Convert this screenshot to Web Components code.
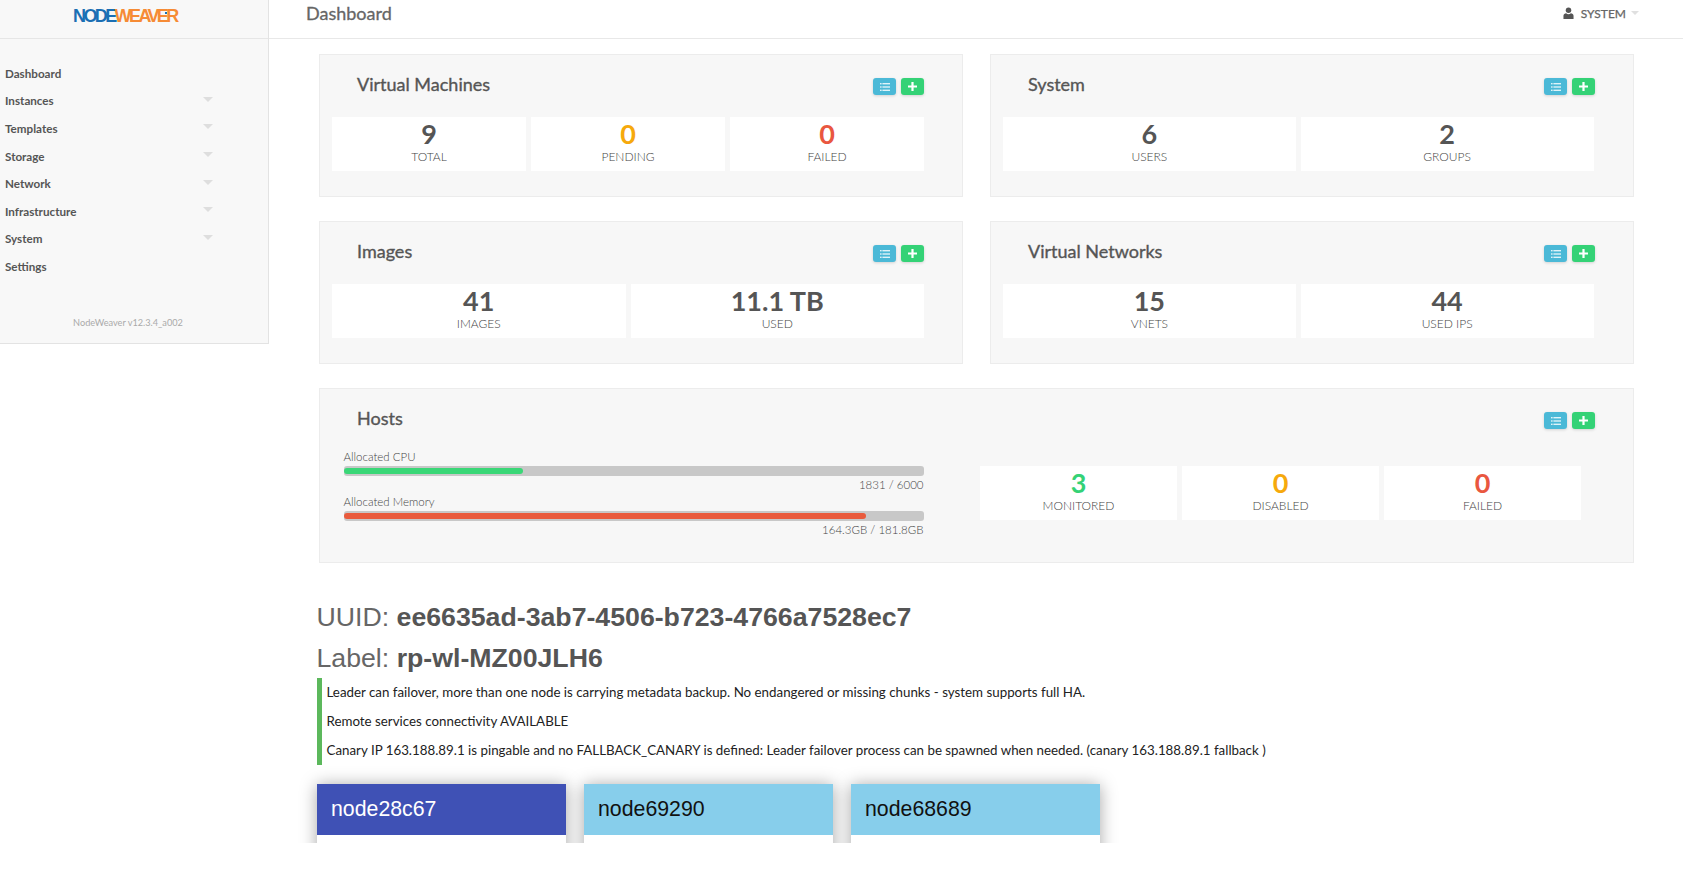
<!DOCTYPE html>
<html>
<head>
<meta charset="utf-8">
<title>NodeWeaver</title>
<style>
	html, body { margin: 0; padding: 0; background: #fff; }
	body { font-family: "Lato", "Liberation Sans", sans-serif; color: #555; }
</style>
</head>
<body>
<nw-app>
	<nw-sidebar slot="side" version="NodeWeaver v12.3.4_a002">
		<nw-nav-item>Dashboard</nw-nav-item>
		<nw-nav-item caret>Instances</nw-nav-item>
		<nw-nav-item caret>Templates</nw-nav-item>
		<nw-nav-item caret>Storage</nw-nav-item>
		<nw-nav-item caret>Network</nw-nav-item>
		<nw-nav-item caret>Infrastructure</nw-nav-item>
		<nw-nav-item caret>System</nw-nav-item>
		<nw-nav-item>Settings</nw-nav-item>
	</nw-sidebar>
	<nw-topbar slot="top" title="Dashboard" user="SYSTEM"></nw-topbar>

	<nw-row>
		<nw-card title="Virtual Machines">
			<nw-stats>
				<nw-stat value="9" label="TOTAL"></nw-stat>
				<nw-stat value="0" label="PENDING" tone="warn"></nw-stat>
				<nw-stat value="0" label="FAILED" tone="bad"></nw-stat>
			</nw-stats>
		</nw-card>
		<nw-card title="System">
			<nw-stats inset>
				<nw-stat value="6" label="USERS"></nw-stat>
				<nw-stat value="2" label="GROUPS"></nw-stat>
			</nw-stats>
		</nw-card>
	</nw-row>
	<nw-row>
		<nw-card title="Images">
			<nw-stats>
				<nw-stat value="41" label="IMAGES"></nw-stat>
				<nw-stat value="11.1 TB" label="USED"></nw-stat>
			</nw-stats>
		</nw-card>
		<nw-card title="Virtual Networks">
			<nw-stats inset>
				<nw-stat value="15" label="VNETS"></nw-stat>
				<nw-stat value="44" label="USED IPS"></nw-stat>
			</nw-stats>
		</nw-card>
	</nw-row>
	<nw-card title="Hosts" wide>
		<nw-hosts>
			<nw-meter slot="meters" label="Allocated CPU" value="1831 / 6000" percent="30.9" color="#3ad777"></nw-meter>
			<nw-meter slot="meters" label="Allocated Memory" value="164.3GB / 181.8GB" percent="90" color="#e95b3d"></nw-meter>
			<nw-stat value="3" label="MONITORED" tone="good"></nw-stat>
			<nw-stat value="0" label="DISABLED" tone="warn"></nw-stat>
			<nw-stat value="0" label="FAILED" tone="bad"></nw-stat>
		</nw-hosts>
	</nw-card>

	<nw-cluster uuid="ee6635ad-3ab7-4506-b723-4766a7528ec7" label="rp-wl-MZ00JLH6">
		<p>Leader can failover, more than one node is carrying metadata backup. No endangered or missing chunks - system supports full HA.</p>
		<p>Remote services connectivity AVAILABLE</p>
		<p>Canary IP 163.188.89.1 is pingable and no FALLBACK_CANARY is defined: Leader failover process can be spawned when needed. (canary 163.188.89.1 fallback )</p>
		<nw-node slot="nodes" name="node28c67" leader></nw-node>
		<nw-node slot="nodes" name="node69290"></nw-node>
		<nw-node slot="nodes" name="node68689"></nw-node>
	</nw-cluster>
</nw-app>

<script>
(function() {
	function define(name, html, extra) {
		let template = document.createElement("template");
		template.innerHTML = html;
		class El extends HTMLElement {
			constructor() {
				super();
				this._shadowRoot = this.attachShadow({mode: "open"});
				this._shadowRoot.appendChild(template.content.cloneNode(true));
			}
			connectedCallback() {
				if (extra) extra.call(this, this._shadowRoot);
			}
		}
		customElements.define(name, El);
	}

	define("nw-app", `
		<style>
		:host { display: block; width: 1683px; height: 843px; overflow: hidden; position: relative; }
		.layout { display: grid; grid-template-columns: 269px 1fr; align-items: start; }
		.content { padding: 15px 0 0 50px; }
		</style>
		<div class="layout">
			<slot name="side"></slot>
			<div>
				<slot name="top"></slot>
				<div class="content"><slot></slot></div>
			</div>
		</div>
	`);

	define("nw-sidebar", `
		<style>
		:host { display: block; height: 344px; box-sizing: border-box; background: #f8f8f8; border-right: 1px solid #e3e3e3; border-bottom: 1px solid #e3e3e3; }
		.brand { height: 39px; box-sizing: border-box; border-bottom: 1px solid #e6e6e6; padding-left: 73px; display: flex; align-items: center; }
		.logo { font: bold 18px "Liberation Sans", sans-serif; letter-spacing: -2.6px; position: relative; top: -3px; line-height: 18px; }
		.logo b { color: #1b6fb4; }
		.logo i { font-style: normal; color: #f68b35; }
		/* the little blue mark inside the last letters of the logo */
		.logo::after { content: ""; position: absolute; left: 92px; top: 5px; width: 2px; height: 2px; background: #1b6fb4; }
		nav { padding: 20.5px 0 0 5px; }
		.version { margin-top: 36.5px; text-align: center; padding-right: 12px; font-size: 9.2px; line-height: 12px; color: #aaa; }
		</style>
		<div class="brand"><div class="logo"><b>NODE</b><i>WEAVER</i></div></div>
		<nav><slot></slot></nav>
		<div class="version" id="version"></div>
	`, function(root) {
		root.getElementById("version").textContent = this.getAttribute("version");
	});

	define("nw-nav-item", `
		<style>
		:host { display: flex; align-items: center; width: 208px; height: 27.6px; font-size: 11.65px; font-weight: 700; color: #555; }
		.caret { margin-left: auto; display: none; width: 0; height: 0; border-left: 5px solid transparent; border-right: 5px solid transparent; border-top: 5px solid #dedede; position: relative; top: -1.5px; }
		:host([caret]) .caret { display: block; }
		</style>
		<slot></slot><span class="caret"></span>
	`);

	define("nw-topbar", `
		<style>
		:host { display: flex; align-items: flex-start; height: 39px; box-sizing: border-box; border-bottom: 1px solid #e8e8e8; }
		h1 { margin: 0 0 0 37px; font-size: 18px; line-height: 26px; font-weight: 400; -webkit-text-stroke: .3px #666; color: #666; }
		.user { margin-left: auto; margin-right: 44px; display: flex; align-items: center; height: 26px; font-size: 12px; font-weight: 400; -webkit-text-stroke: .25px #666; color: #666; }
		svg { width: 11px; height: 12px; margin-right: 7px; }
		.caret { margin-left: 5px; width: 0; height: 0; border-left: 4px solid transparent; border-right: 4px solid transparent; border-top: 4px solid #e0e0e0; }
		</style>
		<h1 id="title"></h1>
		<div class="user">
			<svg viewBox="0 0 12 13"><circle cx="6" cy="3.4" r="3" fill="#555"/><path d="M0.5 13V9.6C0.5 7.9 2 7 3.4 6.8 4 7.4 5 7.8 6 7.8S8 7.4 8.6 6.8C10 7 11.5 7.9 11.5 9.6V13Z" fill="#555"/></svg>
			<span id="user"></span><span class="caret"></span>
		</div>
	`, function(root) {
		root.getElementById("title").textContent = this.getAttribute("title");
		root.getElementById("user").textContent = this.getAttribute("user");
	});

	define("nw-row", `
		<style>
		:host { display: grid; grid-template-columns: 644px 644px; column-gap: 27px; margin-bottom: 24px; }
		</style>
		<slot></slot>
	`);

	define("nw-card", `
		<style>
		:host { display: block; height: 143px; box-sizing: border-box; background: #f7f7f7; border: 1px solid #ececec; padding: 0 38px 0 12px; }
		:host([wide]) { width: 1315px; height: 175px; }
		.head { display: flex; height: 62px; padding-left: 25px; }
		h2 { margin: 15px 0 0; font-size: 18px; line-height: 28px; font-weight: 400; -webkit-text-stroke: .35px #555; color: #555; }
		.tools { margin-left: auto; margin-top: 23px; display: flex; gap: 5px; }
		button { width: 23px; height: 17px; padding: 0; border: 0; border-radius: 3px; display: flex; align-items: center; justify-content: center; box-shadow: 0 1px 3px rgba(0,0,0,.15); }
		.list { background: #4bb9d7; }
		.add { background: #34d276; }
		:host([wide]) .head { height: 60px; }
		</style>
		<div class="head">
			<h2 id="title"></h2>
			<div class="tools">
				<button class="list"><svg width="10" height="8" viewBox="0 0 10 8" fill="#dff3f8"><rect x="0" y="0" width="1.6" height="1.4"/><rect x="2.4" y="0" width="7.6" height="1.4"/><rect x="0" y="3.3" width="1.6" height="1.4"/><rect x="2.4" y="3.3" width="7.6" height="1.4"/><rect x="0" y="6.6" width="1.6" height="1.4"/><rect x="2.4" y="6.6" width="7.6" height="1.4"/></svg></button>
				<button class="add"><svg width="9" height="9" viewBox="0 0 9 9" fill="#fff"><path d="M3.4 0H5.6V3.4H9V5.6H5.6V9H3.4V5.6H0V3.4H3.4Z"/></svg></button>
			</div>
		</div>
		<slot></slot>
	`, function(root) {
		root.getElementById("title").textContent = this.getAttribute("title");
	});

	define("nw-stats", `
		<style>
		:host { display: flex; gap: 5px; }
		:host([inset]) { margin-right: 1.5px; }
		::slotted(nw-stat) { flex: 1 1 0; }
		</style>
		<slot></slot>
	`);

	define("nw-stat", `
		<style>
		:host { display: block; height: 54px; background: #fff; text-align: center; color: #555; }
		.value { font-size: 27px; font-weight: 700; line-height: 28px; padding-top: 3px; }
		.label { font-size: 12px; font-weight: 300; line-height: 16px; color: #444; margin-top: 1px; }
		:host([tone="warn"]) .value { color: #f6a90c; }
		:host([tone="bad"]) .value { color: #e9573f; }
		:host([tone="good"]) .value { color: #34d276; }
		</style>
		<div class="value" id="value"></div>
		<div class="label" id="label"></div>
	`, function(root) {
		root.getElementById("value").textContent = this.getAttribute("value");
		root.getElementById("label").textContent = this.getAttribute("label");
	});

	define("nw-hosts", `
		<style>
		:host { display: flex; }
		.meters { width: 580px; margin-left: 11.5px; }
		.tiles { width: 601px; margin-left: 56.5px; margin-top: 17px; display: flex; gap: 5px; }
		::slotted(nw-stat) { flex: 1 1 0; }
		</style>
		<div class="meters"><slot name="meters"></slot></div>
		<div class="tiles"><slot></slot></div>
	`);

	define("nw-meter", `
		<style>
		:host { display: block; font-size: 11.5px; font-weight: 300; color: #444; height: 45px; }
		.label { line-height: 15px; }
		.track { height: 10px; margin-top: 2px; border-radius: 3px; background: #c8c8c8; padding-top: 2px; box-sizing: border-box; }
		.fill { height: 6px; border-radius: 3px; }
		.value { text-align: right; line-height: 15px; margin-top: 1px; }
		</style>
		<div class="label" id="label"></div>
		<div class="track"><div class="fill" id="fill"></div></div>
		<div class="value" id="value"></div>
	`, function(root) {
		root.getElementById("label").textContent = this.getAttribute("label");
		root.getElementById("value").textContent = this.getAttribute("value");
		let fill = root.getElementById("fill");
		fill.style.width = this.getAttribute("percent") + "%";
		fill.style.background = this.getAttribute("color");
	});

	define("nw-cluster", `
		<style>
		:host { display: block; margin-left: -2.5px; padding-top: 34px; }
		h3 { margin: 0; font: 400 26.7px/40.5px "Liberation Sans", sans-serif; color: #666; }
		h3 b { font-weight: 700; color: #555; }
		.status { border-left: 5px solid #5cb85c; padding-left: 5px; height: 87px; font-size: 13.33px; }
		::slotted(p) { margin: 0 0 1px; line-height: 28px; color: #222; }
		.nodes { display: flex; gap: 17.5px; margin-top: 19px; }
		</style>
		<h3>UUID: <b id="uuid"></b></h3>
		<h3>Label: <b id="label"></b></h3>
		<div class="status"><slot></slot></div>
		<div class="nodes"><slot name="nodes"></slot></div>
	`, function(root) {
		root.getElementById("uuid").textContent = this.getAttribute("uuid");
		root.getElementById("label").textContent = this.getAttribute("label");
	});

	define("nw-node", `
		<style>
		:host { display: block; width: 249.5px; height: 120px; background: #fff; box-shadow: 0 1px 16px rgba(0,0,0,.35); }
		.head { height: 51px; padding-left: 14.5px; background: #87ceeb; color: #111; font: 21.3px/51px "Liberation Sans", sans-serif; }
		:host([leader]) .head { background: #3f51b5; color: #fff; }
		</style>
		<div class="head" id="name"></div>
	`, function(root) {
		root.getElementById("name").textContent = this.getAttribute("name");
	});
})();
</script>
</body>
</html>
